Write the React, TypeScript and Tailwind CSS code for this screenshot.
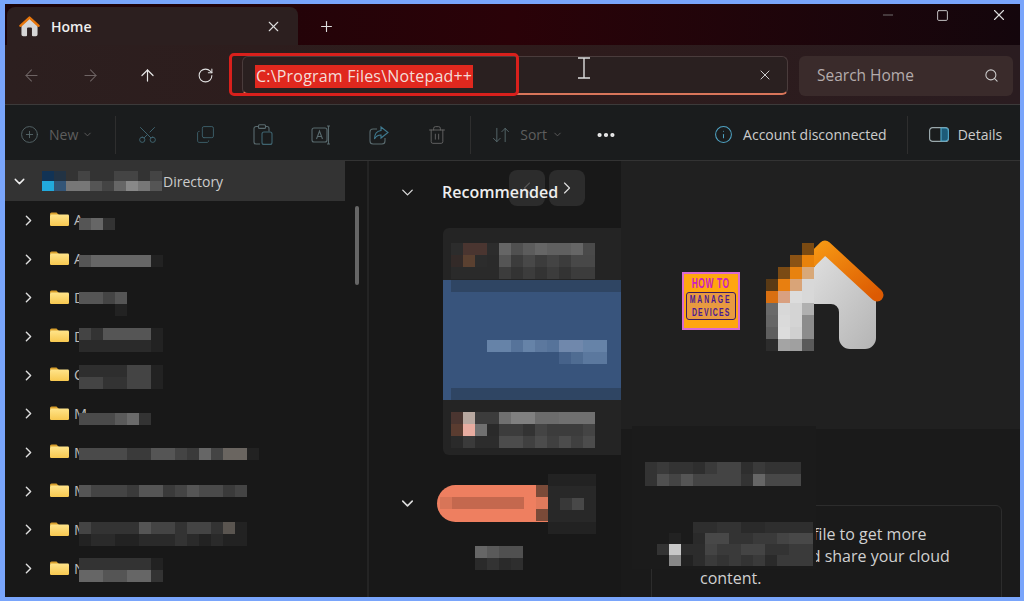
import {
  ArrowDownUp,
  ArrowLeft,
  ArrowRight,
  ArrowUp,
  ChevronDown,
  ChevronLeft,
  ChevronRight,
  CirclePlus,
  Copy,
  Ellipsis,
  Info,
  Minus,
  Plus,
  RotateCw,
  Scissors,
  Search,
  Square,
  Trash2,
  X,
} from "lucide-react";

// one token per cell: "." leaves a hole, anything else is a 3 or 6 digit hex colour
function Mosaic({ rows, cell = 12, cellH, className = "" }: { rows: string[]; cell?: number; cellH?: number; className?: string }) {
  return (
    <div className={className}>
      {rows.map((row, i) => (
        <div key={i} className="flex">
          {row.split(" ").map((c, j) => (
            <div key={j} className="shrink-0" style={{ width: cell, height: cellH ?? cell, background: c === "." ? "transparent" : "#" + c }} />
          ))}
        </div>
      ))}
    </div>
  );
}

function Folder({ id }: { id: number }) {
  return (
    <svg width="19" height="14" viewBox="0 0 19 14" className="shrink-0 -mt-[2px]">
      <defs>
        <linearGradient id={"folder" + id} x1="0" y1="0" x2="0" y2="1">
          <stop offset="0" stopColor="#ffe48a" />
          <stop offset="1" stopColor="#f7c850" />
        </linearGradient>
      </defs>
      <path d="M0 2a1.5 1.5 0 0 1 1.5-1.5h5L9 3H0z" fill="#d9a02c" />
      <rect x="0" y="2.5" width="19" height="11.5" rx="1.2" fill={`url(#folder${id})`} />
    </svg>
  );
}

function HouseIcon({ size }: { size: number }) {
  return (
    <svg width={size} height={size} viewBox="0 0 120 120">
      <path d="M14 56L60 14l46 42v50a10 10 0 0 1-10 10H80a6 6 0 0 1-6-6V72a6 6 0 0 0-6-6H52a6 6 0 0 0-6 6v38a6 6 0 0 1-6 6H24a10 10 0 0 1-10-10z" fill="#d6d6d6" />
      <path d="M8 56L60 9l52 47" fill="none" stroke="#e8760c" strokeWidth="14" strokeLinecap="round" strokeLinejoin="round" />
    </svg>
  );
}

const sideRows = [
  { letter: "A", y: "translate-y-[4px]", rows: ["555 666 333"] },
  { letter: "A", y: "translate-y-[2px]", rows: ["555 666 666 666 666 666 222"] },
  { letter: "D", y: "translate-y-[6px]", rows: ["555 555 444 555", ". . . 222"] },
  { letter: "D", y: "translate-y-[4px]", rows: ["444 333 555 555 555 555 222", "2a2a2a 2a2a2a 2a2a2a 2a2a2a 2a2a2a 2a2a2a 222"] },
  { letter: "C", y: "translate-y-[2px]", rows: ["2e2e2e 2e2e2e 2e2e2e 2e2e2e 444 444 222", "444 444 333 333 444 444 222"] },
  { letter: "M", y: "translate-y-[5px]", rows: ["4a4a4a 4a4a4a 4a4a4a 5a5a5a 6a6a6a 333"] },
  { letter: "M", y: "translate-y-[2px]", rows: ["4a4a4a 4a4a4a 4a4a4a 4a4a4a 3a3a3a 3a3a3a 555 555 444 3a3a3a 666 444 6a6560 6a6560 222"] },
  { letter: "M", y: "translate-y-[0px]", rows: ["555 444 444 444 3a3a3a 555 555 3a3a3a 444 555 4a4a4a 4a4a4a 3a3a3a 444"] },
  { letter: "M", y: "translate-y-[4px]", rows: ["444 333 333 333 333 555 444 444 333 444 444 333 5a5550 222", "222 2a2a2a 2a2a2a 222 222 2a2a2a 2a2a2a 2a2a2a 333 2a2a2a 222 2a2a2a 222 222"] },
  { letter: "N", y: "translate-y-[1px]", rows: ["333 333 333 333 333 333 222", "666 666 555 555 666 666 333"] },
];

const houseMosaic = [
  ". . . 7a4a12",
  ". . 8a5214 e8820a",
  ". 7a4a14 e8820f d8a878",
  "5a3a15 e87f10 d9a478 d8d8d8",
  "d96f10 d9a080 dcdcdc d8d8d8",
  "6a6a6a d8d8d8 d4d4d4 b0b0b0",
  "666 dadada d4d4d4 8c8c8c",
  "5e5e5e dcdcdc d0d0d0 8c8c8c",
  "2c2c2c a4a4a4 a0a0a0 5a5a5a",
];

export default function App() {
  return (
    <div className="w-[1024px] h-[601px] overflow-hidden bg-[#79a5fb] pl-[5px] pr-[4px] pt-[4px] pb-[4px] font-['Open_Sans',sans-serif] text-white">
      <div className="relative w-full h-full flex flex-col bg-[#181818] overflow-hidden">
        {/* tab strip */}
        <div className="h-[41px] shrink-0 flex items-end bg-gradient-to-r from-[#1c0408] via-[#2a0208] to-[#14060c]">
          <div className="w-[291px] h-[38px] ml-[2px] rounded-t-lg bg-[#2c1f1f] flex items-center pl-[12px]">
            <HouseIcon size={21} />
            <span className="ml-[11px] text-[14px] font-semibold text-[#eee]">Home</span>
            <X size={17} strokeWidth={1.6} className="ml-[173px] text-[#ddd]" />
          </div>
          <div className="h-[38px] flex items-center ml-[20px]">
            <Plus size={17} strokeWidth={1.6} className="text-[#ddd]" />
          </div>
          <div className="ml-auto self-start flex items-center h-[22px] pr-[12px] text-[#ddd]">
            <Minus size={16} strokeWidth={1.2} className="text-[#888]" />
            <Square size={13} strokeWidth={1.6} className="ml-[40px] rounded-sm" />
            <X size={18} strokeWidth={1.5} className="ml-[41px]" />
          </div>
        </div>

        {/* address row */}
        <div className="h-[60px] shrink-0 flex items-center pt-[2px] border-b border-[#3c3a3a] bg-gradient-to-r from-[#2c1f1f] via-[#2e1b1b] to-[#2a1c20]">
          <ArrowLeft size={19} strokeWidth={1.3} className="ml-[17px] text-[#6e6464]" />
          <ArrowRight size={19} strokeWidth={1.3} className="ml-[40px] text-[#6e6464]" />
          <ArrowUp size={19} strokeWidth={1.5} className="ml-[38px] text-[#e6e6e6]" />
          <RotateCw size={17} strokeWidth={1.5} className="ml-[40px] text-[#e0e0e0]" />
          <div className="ml-[28px] w-[546px] h-[39px] rounded-md border border-[#4a3c3c] border-b-2 border-b-[#d9755a] bg-[#2a2020] flex items-center pl-[12px] pr-[14px]">
            <span className="bg-[#e0281e] text-[16px] tracking-[0.2px] leading-[23px] text-[#f4dcd8] px-px mt-[2px]">C:\Program Files\Notepad++</span>
            <svg width="14" height="22" viewBox="0 0 14 22" className="ml-[104px] -mt-[14px] text-[#ddd]">
              <path d="M1 1h12M1 21h12M7 1v20" stroke="currentColor" strokeWidth="1.4" fill="none" />
            </svg>
            <X size={16} strokeWidth={1.5} className="ml-auto text-[#ccc]" />
          </div>
          <div className="ml-[11px] w-[214px] h-[40px] rounded-md bg-[#3a2b2b] flex items-center pl-[18px] pr-[14px]">
            <span className="text-[15.5px] mt-[1px] text-[#b4acac]">Search Home</span>
            <Search size={15} strokeWidth={1.7} className="ml-auto text-[#ccc]" />
          </div>
        </div>

        {/* red highlight round the path */}
        <div className="absolute left-[224px] top-[49px] w-[290px] h-[43px] rounded-[5px] border-[3px] border-[#d9201c]" />

        {/* command bar */}
        <div className="h-[56px] shrink-0 flex items-center pt-[4px] border-b border-[#333] bg-[#1a1c1d] text-[#596a6e]">
          <CirclePlus size={19} strokeWidth={1.1} className="ml-[15px]" />
          <span className="ml-[10px] text-[14px] text-[#5e5e5e]">New</span>
          <ChevronDown size={11} className="ml-[4px] text-[#5e5e5e]" />
          <div className="w-px h-[38px] bg-[#2e2e2e] ml-[22px]" />
          <Scissors size={21} strokeWidth={1.1} className="ml-[21px] -rotate-90 text-[#3f6470]" />
          <Copy size={19} strokeWidth={1.1} className="ml-[38px] -scale-y-100 text-[#3f6470]" />
          <svg width="20" height="21" viewBox="0 0 20 21" className="ml-[38px]" fill="none" stroke="currentColor" strokeWidth="1.1">
            <path d="M6 2.5H3a2 2 0 0 0-2 2V18a2 2 0 0 0 2 2h4M12 2.5h2a2 2 0 0 1 2 2v3" />
            <rect x="5.5" y="0.8" width="7" height="3.6" rx="1" />
            <rect x="9" y="8" width="10" height="12.4" rx="2" stroke="#3f6470" />
          </svg>
          <svg width="20" height="20" viewBox="0 0 20 20" className="ml-[38px]" fill="none" stroke="currentColor" strokeWidth="1.1">
            <rect x="1" y="3" width="15" height="14" rx="2" />
            <path d="M16 1h3M16 19h3M17.5 1v18M5.5 14l3-8 3 8M6.5 11.5h4" />
          </svg>
          <svg width="20" height="20" viewBox="0 0 20 20" className="ml-[38px]" fill="none" stroke="currentColor" strokeWidth="1.1">
            <path d="M8 4H4a3 3 0 0 0-3 3v9a3 3 0 0 0 3 3h9a3 3 0 0 0 3-3v-3" />
            <path d="M12 2l7 5.5-7 5.5V10c-3 0-5 1-6.500 4 0-5 2.500-8 6.500-8.500z" stroke="#3f7a90" />
          </svg>
          <Trash2 size={20} strokeWidth={1.1} className="ml-[38px] text-[#666]" />
          <div className="w-px h-[38px] bg-[#2e2e2e] ml-[23px]" />
          <ArrowDownUp size={20} strokeWidth={1.1} className="ml-[20px]" />
          <span className="ml-[9px] text-[14px] text-[#5e5e5e]">Sort</span>
          <ChevronDown size={11} className="ml-[5px] text-[#5e5e5e]" />
          <Ellipsis size={22} strokeWidth={2.6} className="ml-[32px] text-[#eee]" />
          <Info size={19} strokeWidth={1.3} className="ml-[97px] text-[#4fa3c4]" />
          <span className="ml-[10px] text-[14px] text-[#ccc]">Account disconnected</span>
          <div className="w-px h-[38px] bg-[#2e2e2e] ml-[20px]" />
          <svg width="20" height="15" viewBox="0 0 20 15" className="ml-[21px]" fill="none">
            <rect x="0.6" y="0.6" width="18.8" height="13.8" rx="3" stroke="#9aa8ac" strokeWidth="1.2" />
            <path d="M12 1h4.400A3 3 0 0 1 19.400 4v7a3 3 0 0 1-3 3H12z" fill="#1d5b78" stroke="#4fa3c4" strokeWidth="1.2" />
          </svg>
          <span className="ml-[9px] text-[14px] text-[#ccc]">Details</span>
        </div>

        {/* body */}
        <div className="flex-1 flex min-h-0">
          <div className="relative w-[364px] shrink-0 border-r-2 border-[#242424] bg-[#181818]">
            <div className="w-[340px] h-[40px] bg-[#333] flex items-center pl-[6px]">
              <ChevronDown size={17} strokeWidth={2} className="text-[#eee]" />
              <Mosaic className="ml-[14px] w-[120px]" cellH={10} rows={["135 234 333 444 333 333 444 444 333 444", "2ad 357 777 777 555 444 666 888 777 555"]} />
              <span className="text-[14px] ml-[1px] mt-[1px] text-[#ccc]">Directory</span>
            </div>
            <div>
              {sideRows.map((r, i) => (
                <div key={i} className="h-[38.7px] flex items-center pl-[15px]">
                  <ChevronRight size={17} strokeWidth={2} className="text-[#ddd]" />
                  <div className="ml-[13px] flex items-center"><Folder id={i} /></div>
                  <span className="ml-[5px] w-[11px] text-[14.5px] text-[#bbb]">{r.letter}</span>
                  <div className={"-ml-[6px] " + r.y}>
                    <Mosaic rows={r.rows} />
                  </div>
                </div>
              ))}
            </div>
            <div className="absolute left-[350px] top-[45px] w-[4px] h-[79px] rounded-full bg-[#666]" />
          </div>

          <div className="relative w-[252px] shrink-0 bg-[#181818]">
            <div className="absolute left-[140px] top-[9px] w-[36px] h-[36px] rounded-lg bg-[#2c2c2c] flex items-center justify-center text-[#555]">
              <ChevronLeft size={20} strokeWidth={1.4} />
            </div>
            <div className="absolute left-[180px] top-[9px] w-[36px] h-[36px] rounded-lg bg-[#2c2c2c] flex items-center justify-center text-[#ddd]">
              <ChevronRight size={20} strokeWidth={1.4} />
            </div>
            <div className="relative flex items-center h-[62px] pl-[29px]">
              <ChevronDown size={19} strokeWidth={1.6} className="text-[#ddd]" />
              <span className="ml-[25px] text-[16px] font-semibold text-[#eee]">Recommended</span>
            </div>

            {/* blurred card */}
            <div className="ml-[74px] mt-[5px] h-[227px] rounded-l-md bg-[#242424] overflow-hidden flex flex-col">
              <Mosaic className="ml-[8px] mt-[15px] h-[37px]" rows={[
                "2c2c2c 4a3530 4a3530 2c2c2c 666 505050 5c5c5c 666 606060 606060 666 4a4a4a",
                "332a28 5a4030 2c2c2c 2a2a2a 555 3c3c3c 484848 3c3c3c 444 3c3c3c 484848 484848",
                "2a2a2a 2a2a2a 2a2a2a 2a2a2a 3c3c3c 333 3c3c3c 333 3c3c3c 333 3c3c3c 3c3c3c",
              ]} />
              <div className="h-[120px] bg-[#38547c] relative">
                <div className="h-[12px] ml-[8px] bg-[#2f4563]" />
                <Mosaic className="absolute left-[44px] top-[60px]" rows={[
                  "6683a8 6683a8 56739a 6683a8 5c789e 56739a 7088ac 7088ac 6683a8 6683a8",
                  ". . . . . . 46628a 4f6c92 5b789e 5b789e",
                ]} />
                <div className="absolute bottom-0 left-[8px] right-0 h-[12px] bg-[#2f4563]" />
              </div>
              <Mosaic className="ml-[8px] mt-[12px]" rows={[
                "4a3530 b8a8a0 3c3c3c 3c3c3c 707070 808080 808080 6c6c6c 6c6c6c 707070 707070 707070",
                "5a3c30 e8aca0 707070 2a2a2a 3c3c3c 3c3c3c 333 444 3c3c3c 3c3c3c 3c3c3c 444",
                "2a2a2a 3a3a3a 2c2c2c 2c2c2c 4c4c4c 4c4c4c 404040 4c4c4c 404040 4c4c4c 404040 4c4c4c",
              ]} />
            </div>

            {/* second group */}
            <div className="flex items-center h-[37px] pl-[29px] mt-[30px]">
              <ChevronDown size={19} strokeWidth={2} className="text-[#ddd]" />
              <div className="ml-[20px] w-[111px] h-[37px] rounded-l-full bg-[#ee7f60] relative">
                <div className="absolute left-[15px] top-[12px] w-[72px] h-[12px] bg-[#c4684e]" />
                <div className="absolute left-[3px] top-[12px] w-[12px] h-[12px] bg-[#d87558]" />
                <Mosaic className="absolute right-0 top-0" rows={["7a4a38", "e07a5c", "7a4a38"]} />
              </div>
              <Mosaic className="-my-[12px]" rows={[
                "222 222 222 222",
                "282828 282828 282828 282828",
                "282828 383838 484848 282828",
                "282828 282828 282828 282828",
                "222 222 222 222",
              ]} />
            </div>
            <Mosaic className="ml-[106px] mt-[24px]" rows={["666 5a5a5a 505050 505050", "2a2a2a 333 2a2a2a 2e2e2e"]} />
          </div>

          <div className="relative flex-1 flex flex-col">
            <div className="h-[268px] shrink-0 bg-[#202020] relative">
              {/* site logo, sits over the pane art */}
              <div className="absolute left-[61px] top-[111px] w-[58px] h-[58px] bg-[#ffa60f] border-[2px] border-[#d96ad0] flex flex-col items-center font-['Liberation_Sans',sans-serif]">
                <span className="mt-[2px] text-[14px] leading-[15px] tracking-[1px] font-bold text-[#cc20c0] scale-x-[0.6] whitespace-nowrap">HOW TO</span>
                <div className="mt-[1px] w-[50px] h-[28px] rounded-[3px] border border-[#3a1a60] bg-[#e89a40] flex flex-col items-center justify-center text-[#4a1a90] font-bold">
                  <span className="text-[11.5px] leading-[13px] tracking-[3px] scale-x-[0.6] whitespace-nowrap">MANAGE</span>
                  <span className="text-[11.5px] leading-[13px] tracking-[2px] scale-x-[0.6] whitespace-nowrap">DEVICES</span>
                </div>
              </div>
              {/* pane art */}
              <svg width="120" height="112" viewBox="0 0 120 112" className="absolute left-[145px] top-[79px]">
                <defs>
                  <linearGradient id="wall" x1="0" y1="0" x2="1" y2="1">
                    <stop offset="0" stopColor="#e2e2e2" />
                    <stop offset="1" stopColor="#b4b4b4" />
                  </linearGradient>
                  <linearGradient id="roof" x1="0" y1="0" x2="1" y2="1">
                    <stop offset="0" stopColor="#f79a14" />
                    <stop offset="1" stopColor="#dc5a02" />
                  </linearGradient>
                </defs>
                <path d="M40 40L59 10 110 58V98a11 11 0 0 1-11 11H84a11 11 0 0 1-11-11V72a8 8 0 0 0-8-8H40z" fill="url(#wall)" />
                <path d="M42 24L59 7 111 55" fill="none" stroke="url(#roof)" strokeWidth="13" strokeLinecap="round" strokeLinejoin="round" />
              </svg>
              <Mosaic className="absolute left-[145px] top-[82px]" rows={houseMosaic} />
            </div>
            <div className="flex-1 bg-[#1a1a1a] relative">
              <div className="absolute left-[30px] top-[76px] w-[351px] h-[120px] rounded-md border border-[#2c2c2c] text-[16px] leading-[22px] text-[#d0d0d0]">
                <div className="ml-[161px] mt-[17px] whitespace-nowrap">file to get more</div>
                <div className="ml-[140px] whitespace-nowrap">and share your cloud</div>
                <div className="ml-[48px] whitespace-nowrap">content.</div>
              </div>
              <div className="absolute left-[11px] -top-[3px] w-[184px] h-[143px] bg-[#1b1b1b]" />
              <Mosaic className="absolute left-[24px] top-[33px]" rows={[
                "333 3a3a3a 333 333 2e2e2e 3a3a3a 444 444 2e2e2e 3a3a3a 333 333 333",
                "333 505050 444 555 444 444 444 444 333 666 484848 484848 484848",
              ]} />
              <Mosaic className="absolute left-[36px] top-[93px]" cellH={11} rows={[
                "1b1b1b 1b1b1b 1b1b1b 2e2e2e 2e2e2e 333 333 2a2a2a 2a2a2a 2e2e2e 2e2e2e 2e2e2e 2e2e2e",
                "1b1b1b 222 1b1b1b 2a2a2a 484848 484848 333 333 3a3a3a 3a3a3a 444 484848 484848",
                "333 c8c8c8 2c2c2c 2c2c2c 444 3a3a3a 3a3a3a 444 444 333 333 3a3a3a 3a3a3a",
                "1b1b1b 888 222 2c2c2c 3a3a3a 333 3a3a3a 333 3a3a3a 2a2a2a 3a3a3a 3a3a3a 3a3a3a",
              ]} />
            </div>
          </div>
        </div>
      </div>
    </div>
  );
}
